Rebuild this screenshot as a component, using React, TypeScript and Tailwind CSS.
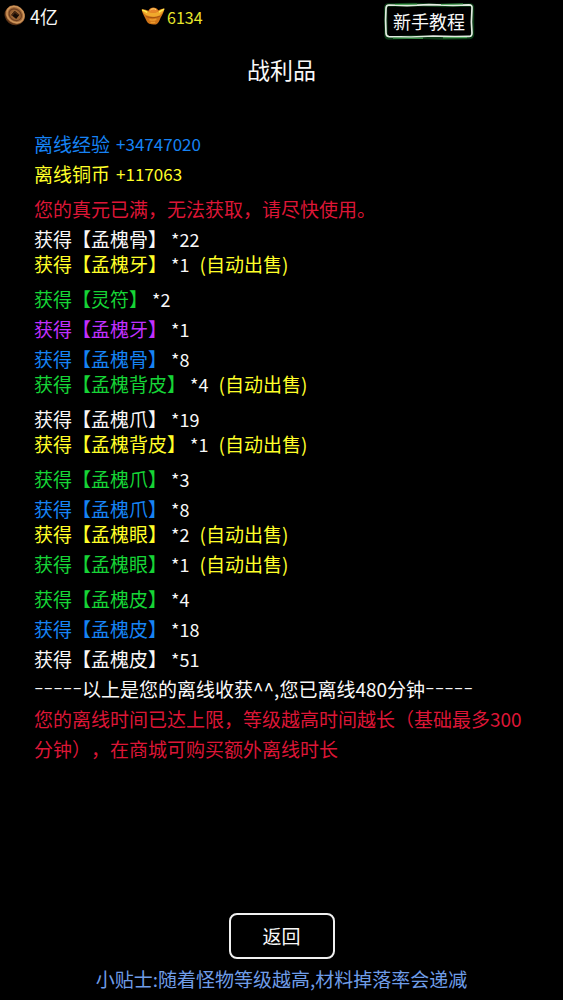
import type { ReactNode } from 'react';

type Drop = {
  name: string;
  count: number;
  tone: string;
  autoSold?: boolean;
};

const WHITE = 'text-[#f8f8f8]';
const YELLOW = 'text-[#ffff28]';
const GREEN = 'text-[#16d436]';
const BLUE = 'text-[#1683f4]';
const PURPLE = 'text-[#c030ff]';

const drops: Drop[] = [
  { name: '孟槐骨', count: 22, tone: WHITE },
  { name: '孟槐牙', count: 1, tone: YELLOW, autoSold: true },
  { name: '灵符', count: 2, tone: GREEN },
  { name: '孟槐牙', count: 1, tone: PURPLE },
  { name: '孟槐骨', count: 8, tone: BLUE },
  { name: '孟槐背皮', count: 4, tone: GREEN, autoSold: true },
  { name: '孟槐爪', count: 19, tone: WHITE },
  { name: '孟槐背皮', count: 1, tone: YELLOW, autoSold: true },
  { name: '孟槐爪', count: 3, tone: GREEN },
  { name: '孟槐爪', count: 8, tone: BLUE },
  { name: '孟槐眼', count: 2, tone: YELLOW, autoSold: true },
  { name: '孟槐眼', count: 1, tone: GREEN, autoSold: true },
  { name: '孟槐皮', count: 4, tone: GREEN },
  { name: '孟槐皮', count: 18, tone: BLUE },
  { name: '孟槐皮', count: 51, tone: WHITE },
];

function CoinIcon() {
  return (
    <svg viewBox="0 0 22 22" className="size-[22px]" aria-hidden="true">
      <g transform="rotate(38 11 11)">
        <ellipse cx="11" cy="11.8" rx="10.4" ry="9.2" fill="#5a3216" />
        <ellipse cx="11" cy="10.6" rx="10.2" ry="8.8" fill="#a56b3a" />
        <ellipse cx="11" cy="10.4" rx="9" ry="7.6" fill="none" stroke="#cf975c" strokeWidth="1.4" />
        <ellipse cx="11" cy="10.6" rx="7.2" ry="6" fill="#6f4020" />
        <ellipse cx="11" cy="10.6" rx="6" ry="4.8" fill="#9a6334" />
        <path d="M7.4 7.6h7.2v6H7.4z" fill="#b27a45" />
        <path d="M8 8h6.400v5.400H8z" fill="#160b05" />
        <path d="M8 8h6.400l-1.400 1.400H9.600v4H8z" fill="#4a2912" />
      </g>
    </svg>
  );
}

function IngotIcon() {
  return (
    <svg viewBox="0 0 24 18" className="h-[18px] w-6" aria-hidden="true">
      <path d="M.6 2.6C3 2.4 5.4 3 7.4 3.8 8.6 1.4 10.4.6 12.4.6s3.8.8 4.8 2.6C19 2.2 21 1.6 23.6 1.4c-.8 3.6-2.4 6.6-4 9.4C18.4 13.8 17.2 16.8 15 17.4c-2.2.4-4.6.2-6.8-.6-2.2-1.2-3-3.6-4.2-6C2.6 8 1.2 5.6.6 2.6z" fill="#cf7418" />
      <path d="M.8 2.8c2.600.2 5 1 7.200 2.200 2.800 1.200 6.200 1 8.800-.2 2-1.200 4-2.400 6.600-3-1 3.200-2.600 5.400-5 6.600-3.800 1.600-8.800 1.600-12.400.2C3.600 7.400 1.800 5.400.8 2.800z" fill="#f0a92c" />
      <path d="M7.4 4.8C8.400 2.200 10.400 1 12.400 1s3.800 1 4.600 3.200c-2.400 2-7.200 2.200-9.600.6z" fill="#e8862a" />
      <path d="M9.4 3c1.400-1.400 4-1.600 5.600-.4" stroke="#ffd873" strokeWidth="1" fill="none" />
      <path d="M1.2 3c2 .4 3.400 1.200 5 2.400M18 5.2c1.600-1 3-2 5-3" stroke="#ffef55" strokeWidth="1.4" fill="none" />
      <path d="M5.2 9.6c3.400 1.400 10 1.400 13.600-.2" stroke="#a4520f" strokeWidth="1" fill="none" />
      <path d="M8.4 12.4c2 .8 4.600.8 7-.2M9.600 15.200c1.600.4 3 .4 4.600 0" stroke="#eb9a2c" strokeWidth="1.6" fill="none" />
    </svg>
  );
}

function BrushFrame() {
  return (
    <svg
      viewBox="0 0 92 38"
      preserveAspectRatio="none"
      className="pointer-events-none absolute -inset-0.5 h-[38px] w-[92px]"
      fill="none"
      aria-hidden="true"
    >
      <path d="M5 3 30 2.500 60 3.500 87 3Q90 3 89.500 6L89.500 33Q89 35.500 86 35.500L60 36 30 35 6 36Q3 36 3 33L2.600 7Q2.600 3 5 3z" stroke="#0b3a15" strokeWidth="3.400" />
      <path d="M3 6.500Q3 3 6 3L24 3.600 46 2.600 70 3.400 86 2.800Q89.500 2.800 89 6.500L88.400 20 89 31Q89 34.500 86 34.400L72 34.600 50 34 28 35 6 34.600Q3 34.400 3 31L2.600 18z" stroke="#e2ebe0" strokeWidth="1.700" />
      <path d="M12 2.400 34 2.200M58 2.400 80 2M10 36 40 36.200M60 35.800 84 35.600" stroke="#4fae5c" strokeWidth="1" />
    </svg>
  );
}

function Latin({ children }: { children: ReactNode }) {
  return <span className="text-[17px]">{children}</span>;
}

function Dashes() {
  return <span className="font-['Liberation_Mono',monospace] text-[16px] leading-5">–––––</span>;
}

function DropRow({ drop }: { drop: Drop }) {
  return (
    <li className={drop.autoSold ? 'flex h-[30px] items-start' : 'flex h-[30px] items-center'}>
      <span className={drop.tone}>获得【{drop.name}】</span>
      <span className="ml-1 text-[18px] text-[#f8f8f8]">*{drop.count}</span>
      {drop.autoSold && <span className="ml-2.5 text-[#ffff28]">(自动出售)</span>}
    </li>
  );
}

export default function App() {
  return (
    <div className="flex min-h-screen flex-col bg-black font-['Noto_Sans_CJK_SC',sans-serif] text-[19px] leading-5 text-[#f8f8f8] [text-spacing-trim:space-all]">
      <header className="flex items-start pt-1 pl-1">
        <div className="flex w-[137px] items-center gap-1">
          <CoinIcon />
          <span className="pt-0.5 text-[18px]">4亿</span>
        </div>
        <div className="flex h-6 flex-1 items-center gap-0.5">
          <IngotIcon />
          <span className="pt-0.5 text-base leading-5 text-[#e6e62c]">6134</span>
        </div>
        <button
          type="button"
          className="relative mr-[90px] h-[34px] w-[88px] bg-black text-[18px] leading-5"
        >
          <BrushFrame />
          新手教程
        </button>
      </header>

      <main className="flex flex-1 flex-col">
        <h1 className="mt-4 text-center text-[23px] leading-[30px]">战利品</h1>

        <ul className="mt-[50px] pr-6 pl-[34px]">
          <li className="flex h-[30px] items-start gap-1.5 text-[#1683f4]">
            离线经验 <Latin>+34747020</Latin>
          </li>
          <li className="flex h-[30px] items-start gap-1.5 text-[#ffff28]">
            离线铜币 <Latin>+117063</Latin>
          </li>
          <li className="flex h-[30px] items-center text-[#dc1636]">您的真元已满，无法获取，请尽快使用。</li>
          {drops.map((drop, index) => (
            <DropRow key={index} drop={drop} />
          ))}
        </ul>

        <div className="pr-[30px] pl-[34px] leading-[30px]">
          <p className="flex h-[30px] items-center whitespace-nowrap">
            <Dashes />
            <span>以上是您的离线收获^^,您已离线480分钟</span>
            <Dashes />
          </p>
          <p className="text-[#dc1636]">您的离线时间已达上限，等级越高时间越长（基础最多300分钟），在商城可购买额外离线时长</p>
        </div>
      </main>

      <footer className="flex flex-col items-center pb-[11px]">
        <button type="button" className="h-[46px] w-[106px] rounded-lg border-2 border-[#f0f0f0] bg-black">
          返回
        </button>
        <p className="mt-[10px] text-[#6f9de8]">小贴士:随着怪物等级越高,材料掉落率会递减</p>
      </footer>
    </div>
  );
}
